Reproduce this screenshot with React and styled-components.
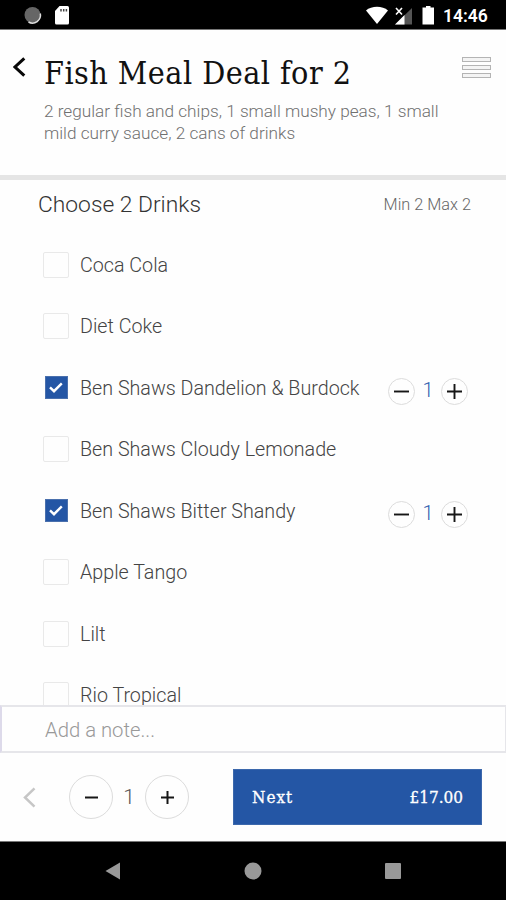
import {useState} from "react";
import styled, {createGlobalStyle} from "styled-components";

const drinks = [
    {name: "Coca Cola", qty: 0},
    {name: "Diet Coke", qty: 0},
    {name: "Ben Shaws Dandelion & Burdock", qty: 1},
    {name: "Ben Shaws Cloudy Lemonade", qty: 0},
    {name: "Ben Shaws Bitter Shandy", qty: 1},
    {name: "Apple Tango", qty: 0},
    {name: "Lilt", qty: 0},
    {name: "Rio Tropical", qty: 0},
];

function StatusIcons(){
    return(
        <svg width="68" height="22" viewBox="0 0 68 22">
            <path d="M0 6.500C5.500 1.500 16.500 1.500 22 6.500L11 20z" fill="#fff" />
            <path d="M29 20.500L46 4v16.500z" fill="#555" />
            <path d="M29 20.500L38.500 11v9.500z" fill="#fff" />
            <path d="M30 4l6 6.500M36 4l-6 6.500" stroke="#fff" strokeWidth="1.600" />
            <path d="M56.500 3.500h3.500V2h4.500v1.500H68v17H56.500z" fill="#fff" />
        </svg>
    )
}

function Sign({plus, size, weight}){
    return(
        <svg width={size} height={size} viewBox={`0 0 ${size} ${size}`}>
            <path
                d={`M0 ${size/2}H${size}${plus ? `M${size/2} 0V${size}` : ""}`}
                stroke="#161616"
                strokeWidth={weight}
            />
        </svg>
    )
}

function Drink({name, qty, onChange}){
    return(
        <Row>
            <CheckSlot>
                <Checkbox $checked={qty > 0} aria-label={name} onClick={() => onChange(qty > 0 ? 0 : 1)}>
                    {qty > 0 && (
                        <svg width="14" height="11" viewBox="0 0 14 11">
                            <path d="M1 5.300L5 9.200L12.800 1.300" fill="none" stroke="#fff" strokeWidth="2.400" />
                        </svg>
                    )}
                </Checkbox>
            </CheckSlot>
            <DrinkName>{name}</DrinkName>
            {qty > 0 && (
                <Stepper>
                    <RoundButton $size={27} aria-label="less" onClick={() => onChange(qty - 1)}>
                        <Sign size={15} weight={1.9} />
                    </RoundButton>
                    <Amount>{qty}</Amount>
                    <RoundButton $size={27} aria-label="more" onClick={() => onChange(qty + 1)}>
                        <Sign plus size={15} weight={1.9} />
                    </RoundButton>
                </Stepper>
            )}
        </Row>
    )
}

function App(){
    const [items, setItems] = useState(drinks);
    const [count, setCount] = useState(1);

    const changeQty = (index, qty) => {
        setItems(items.map((item, i) => i === index ? {...item, qty} : item));
    }

    return(
        <Screen>
            <GlobalStyle />
            <StatusBar>
                <svg width="46" height="22" viewBox="0 0 46 22">
                    <circle cx="9.500" cy="11" r="8" fill="#666" />
                    <path d="M17.300 9.500A8 8 0 0 1 5.500 18" fill="none" stroke="#ddd" strokeWidth="1.500" />
                    <path d="M36.500 2h8a1.500 1.500 0 0 1 1.500 1.500v15.500a1.500 1.500 0 0 1-1.500 1.500h-11a1.500 1.500 0 0 1-1.500-1.500V7z" fill="#fff" />
                    <path d="M38 5v2.500M40.700 5v2.500M43.400 5v2.500" stroke="#444" strokeWidth="1.500" />
                </svg>
                <StatusRight>
                    <StatusIcons />
                    <Clock>14:46</Clock>
                </StatusRight>
            </StatusBar>

            <Header>
                <svg width="13" height="20" viewBox="0 0 13 20">
                    <path d="M11.300 1.300L2 10l9.300 8.700" fill="none" stroke="#080808" strokeWidth="3" />
                </svg>
                <HeaderText>
                    <Title>Fish Meal Deal for 2</Title>
                    <Description>
                        2 regular fish and chips, 1 small mushy peas, 1 small mild curry sauce, 2 cans of drinks
                    </Description>
                </HeaderText>
                <MenuIcon>
                    <MenuLine />
                    <MenuLine />
                    <MenuLine />
                </MenuIcon>
            </Header>

            <Choices>
                <SectionHead>
                    <SectionTitle>Choose 2 Drinks</SectionTitle>
                    <Limits>Min 2 Max 2</Limits>
                </SectionHead>
                {items.map((item, i) => (
                    <Drink key={item.name} {...item} onChange={(qty) => changeQty(i, qty)} />
                ))}
            </Choices>

            <Note placeholder="Add a note..." />

            <Footer>
                <svg width="13" height="21" viewBox="0 0 13 21">
                    <path d="M11.500 1.300L2 10.500l9.500 9.200" fill="none" stroke="#c6c6c6" strokeWidth="2.500" />
                </svg>
                <MealStepper>
                    <RoundButton $size={44} aria-label="less" onClick={() => setCount(Math.max(1, count - 1))}>
                        <Sign size={13} weight={2} />
                    </RoundButton>
                    <MealCount>{count}</MealCount>
                    <RoundButton $size={44} aria-label="more" onClick={() => setCount(count + 1)}>
                        <Sign plus size={13} weight={2} />
                    </RoundButton>
                </MealStepper>
                <NextButton>
                    <NextLabel>Next</NextLabel>
                    <span>£17.00</span>
                </NextButton>
            </Footer>

            <NavBar>
                <svg width="16" height="18" viewBox="0 0 16 18"><path d="M0.500 9L15 0.500v17z" fill="#999" /></svg>
                <svg width="18" height="18" viewBox="0 0 18 18"><circle cx="9" cy="9" r="8.500" fill="#999" /></svg>
                <svg width="16" height="16" viewBox="0 0 16 16"><rect width="16" height="16" rx="1" fill="#999" /></svg>
            </NavBar>
        </Screen>
    )
}
export default App;

const GlobalStyle = createGlobalStyle`
*{
box-sizing:border-box;
}
body{
margin:0;
background:#fff;
}
button,input{
font-family:inherit;
margin:0;
padding:0;
}
svg{
display:block;
flex:none;
}
`;
const Screen = styled.div`
display:flex;
flex-direction:column;
width:506px;
height:900px;
overflow:hidden;
background:#fefefe;
font-family:Roboto, sans-serif;
font-weight:300;
`;
const StatusBar = styled.div`
display:flex;
justify-content:space-between;
align-items:center;
flex:none;
height:30px;
padding:0 18px 0 23px;
background:#000;
border-bottom:1px solid #777;
`;
const StatusRight = styled.div`
display:flex;
align-items:center;
`;
const Clock = styled.div`
width:45px;
margin-left:9px;
color:#fff;
font-size:17.500px;
font-weight:600;
line-height:30px;
white-space:nowrap;
padding-top:2px;
`;
const Header = styled.header`
display:flex;
align-items:flex-start;
flex:none;
height:150px;
padding:27px 15px 0 13px;
border-bottom:5px solid #e5e5e5;
`;
const HeaderText = styled.div`
flex:1;
margin-left:18px;
margin-top:-3px;
`;
const Title = styled.h1`
margin:0;
color:#111;
font-family:"DejaVu Serif Condensed", "DejaVu Serif", serif;
font-size:32px;
font-weight:400;
letter-spacing:0.450px;
line-height:38px;
white-space:nowrap;
`;
const Description = styled.p`
width:410px;
margin:8px 0 0;
color:#707070;
font-size:17.200px;
line-height:22px;
`;
const MenuIcon = styled.div`
display:flex;
flex-direction:column;
gap:3px;
width:29px;
`;
const MenuLine = styled.div`
height:5px;
border:1px solid #b4b4b4;
background:#f4f4f4;
`;
const Choices = styled.main`
flex:none;
height:525px;
padding:0 35px 0 38px;
overflow:hidden;
`;
const SectionHead = styled.div`
display:flex;
justify-content:space-between;
align-items:center;
height:54px;
padding-bottom:6px;
`;
const SectionTitle = styled.h2`
margin:0;
color:#333;
font-size:22.800px;
font-weight:300;
`;
const Limits = styled.div`
color:#666;
font-size:16.300px;
`;
const Row = styled.div`
display:flex;
align-items:center;
height:61.500px;
`;
const CheckSlot = styled.div`
display:flex;
justify-content:center;
width:36px;
margin-right:6px;
`;
const Checkbox = styled.button`
display:flex;
align-items:center;
justify-content:center;
width:${(props) => props.$checked ? 23 : 26}px;
height:${(props) => props.$checked ? 23 : 26}px;
border:${(props) => props.$checked ? "1px solid #4a70ad" : "1px solid #e9e9e9"};
border-radius:${(props) => props.$checked ? 0 : 2}px;
background:${(props) => props.$checked ? "#2456a5" : "#fefefe"};
`;
const DrinkName = styled.div`
flex:1;
padding-top:1px;
color:#444;
font-size:19.700px;
white-space:nowrap;
`;
const Stepper = styled.div`
display:flex;
align-items:center;
padding-top:7px;
padding-right:3px;
`;
const RoundButton = styled.button`
display:flex;
align-items:center;
justify-content:center;
flex:none;
width:${(props) => props.$size}px;
height:${(props) => props.$size}px;
border:1px solid #dcdcdc;
border-radius:50%;
background:#fefefe;
`;
const Amount = styled.div`
width:26px;
padding-bottom:2px;
color:#2f5faf;
font-size:20px;
text-align:center;
line-height:24px;
`;
const Note = styled.input`
flex:none;
width:100%;
height:48px;
padding:2px 0 0 43px;
border:2px solid #e6e6ea;
border-left-color:#dddaea;
border-right-width:1px;
outline:none;
background:#fefefe;
font-size:20.300px;
font-weight:300;
&::placeholder{
color:#999;
opacity:1;
}
`;
const Footer = styled.footer`
display:flex;
align-items:center;
flex:none;
height:88px;
padding:0 24px 0 23px;
`;
const MealStepper = styled.div`
display:flex;
align-items:center;
margin-left:33px;
`;
const MealCount = styled.div`
width:32px;
color:#555;
font-size:21px;
text-align:center;
`;
const NextButton = styled.button`
display:flex;
justify-content:space-between;
align-items:center;
width:249px;
height:56px;
margin-left:auto;
padding:0 18px;
border:1px solid #3c68ac;
background:#2456a5;
color:#fff;
font-family:"DejaVu Serif Condensed", "DejaVu Serif", serif;
font-size:17px;
-webkit-text-stroke:0.300px #fff;
`;
const NextLabel = styled.span`
letter-spacing:1px;
`;
const NavBar = styled.nav`
display:flex;
justify-content:space-between;
align-items:center;
flex:1;
padding:0 105px;
background:#000;
border-top:1px solid #777;
`;
